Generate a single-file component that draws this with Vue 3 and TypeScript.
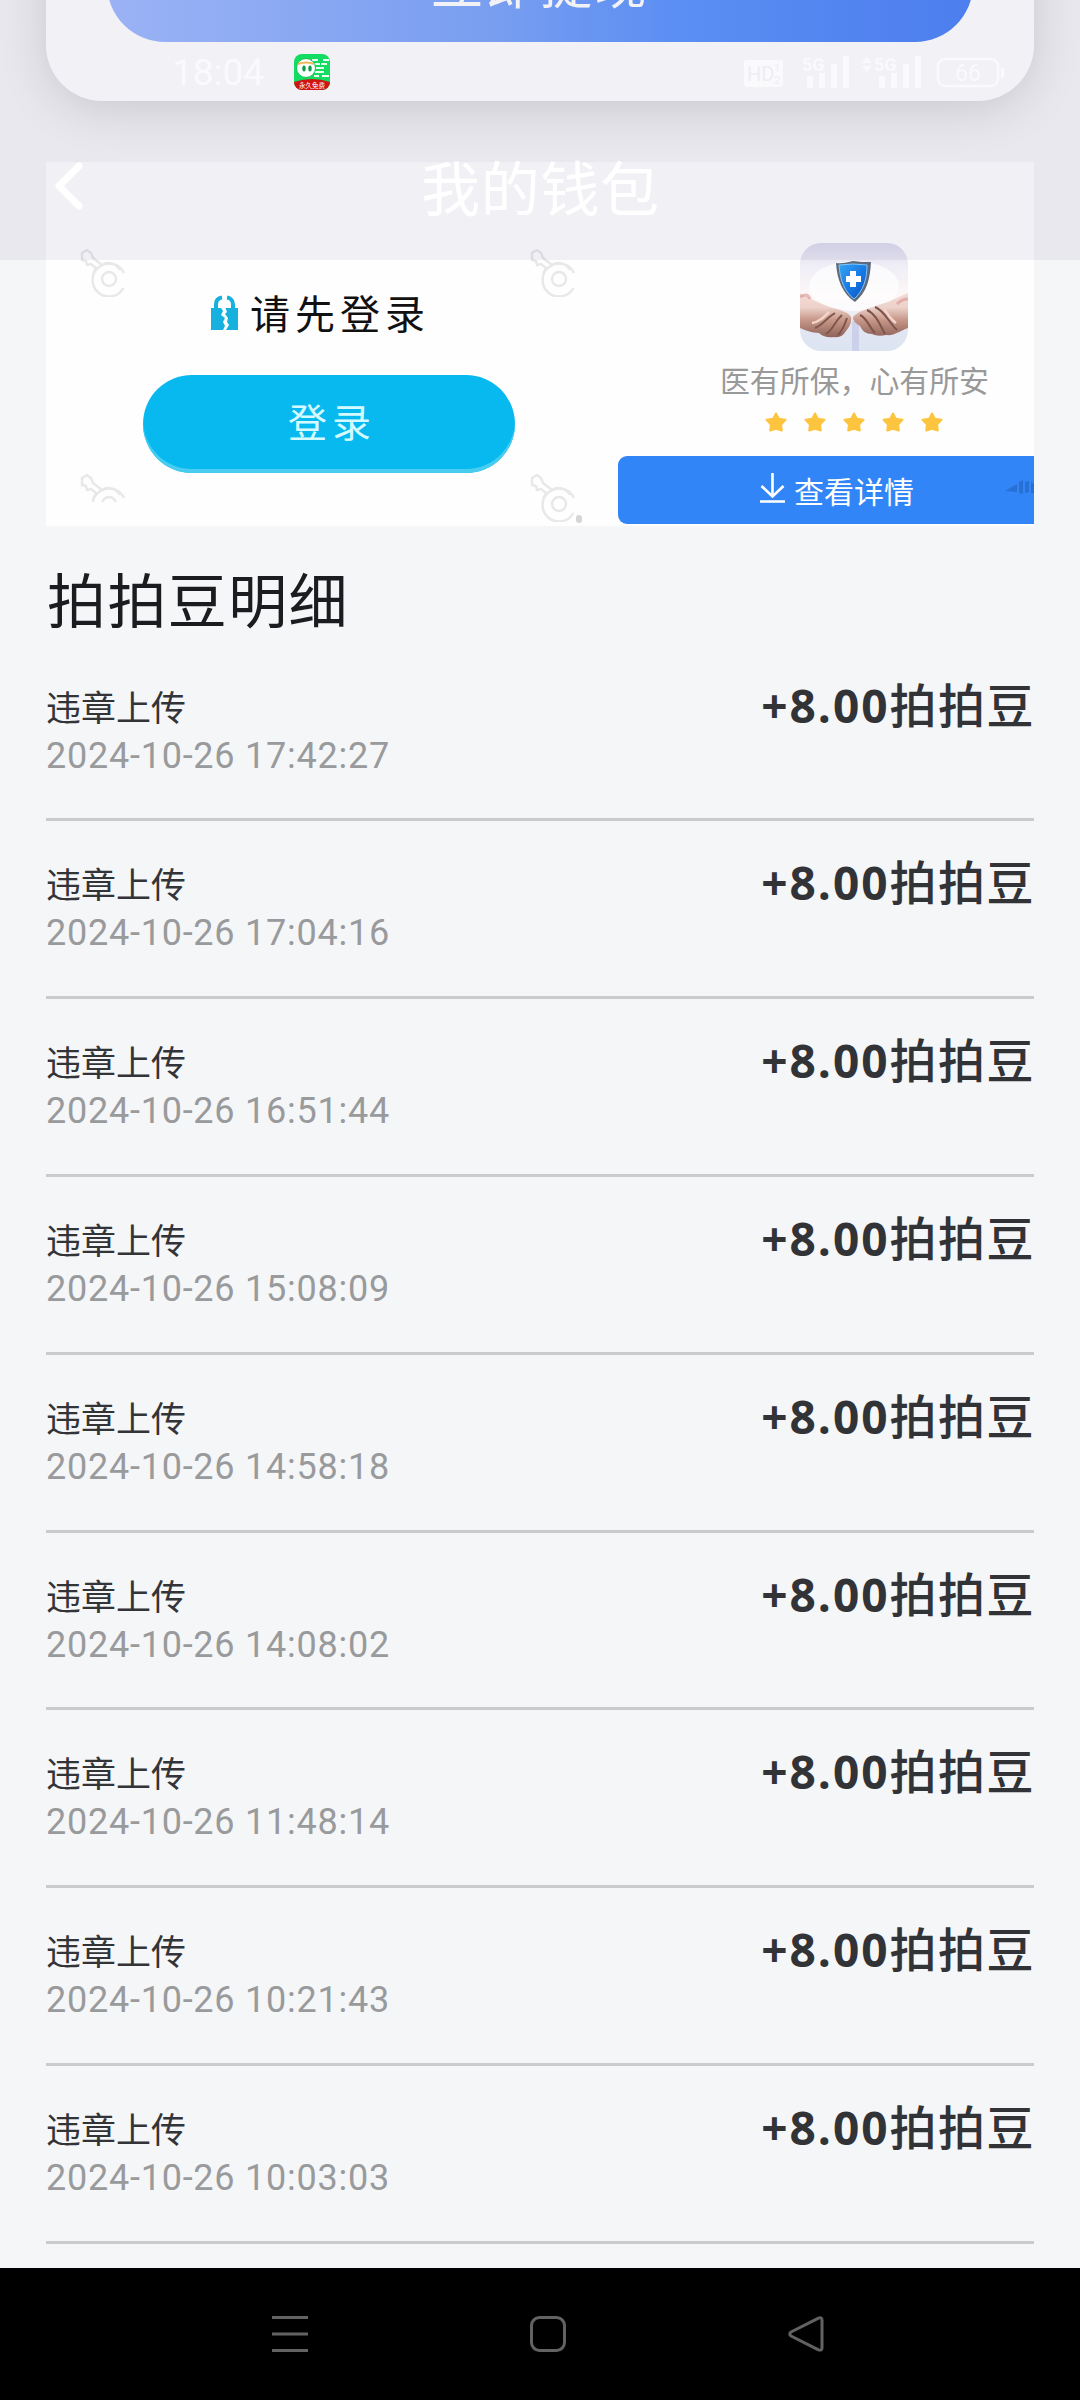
<script setup lang="ts">
interface RecordItem {
  label: string
  time: string
  amount: string
  unit: string
}

const times: string[] = [
  '2024-10-26 17:42:27',
  '2024-10-26 17:04:16',
  '2024-10-26 16:51:44',
  '2024-10-26 15:08:09',
  '2024-10-26 14:58:18',
  '2024-10-26 14:08:02',
  '2024-10-26 11:48:14',
  '2024-10-26 10:21:43',
  '2024-10-26 10:03:03',
]

const records: RecordItem[] = times.map((time) => ({
  label: '违章上传',
  time,
  amount: '+8.00',
  unit: '拍拍豆',
}))

const keyMarks: string[] = ['tl', 'tr', 'bl', 'br']
</script>

<template>
  <div class="page">
    <main class="content">
      <section class="balance-card">
        <button class="withdraw">立即提现</button>
      </section>

      <section class="ad">
        <div class="ad-login">
          <svg v-for="k in keyMarks" :key="k" class="key" :class="k" viewBox="0 0 48 48">
            <g fill="none" stroke="#e8e8ea" stroke-width="2.400">
              <path d="M45 24a16.500 16.500 0 1 0-.5 15M14 31c-1-6 1-9 3-12l-5-4-4 1-1-4-4-1V4l5-3 4 3 2 5 9 7c6-4 14-2 18 5" />
              <circle cx="30" cy="30" r="7" />
            </g>
          </svg>
          <i class="dot"></i>
          <div class="login-title">
            <svg class="lock" width="27" height="36" viewBox="0 0 27 36">
              <path d="M5 15V9.500C5 5.500 7.500 3 11 2.500M16 2.500c4 .5 6 3.500 6 7V15" fill="none" stroke="#16b1df" stroke-width="4" />
              <path d="M0 13h10l2 3-2 4 4 3-2 4 2 4-2 4H0zM27 13H14.500l1.500 4-2 2 3 4-1 4 2 3-3 5h12z" fill="#16b1df" />
            </svg>
            <span>请先登录</span>
          </div>
          <button class="login-btn">登录</button>
        </div>

        <div class="ad-promo">
          <svg class="photo" width="108" height="108" viewBox="0 0 108 108">
            <defs>
              <linearGradient id="sky" x1="0" y1="0" x2="0" y2="1">
                <stop offset="0" stop-color="#dcdcef" />
                <stop offset=".22" stop-color="#f0eef6" />
                <stop offset=".5" stop-color="#fdf8f7" />
                <stop offset=".75" stop-color="#e5e6f2" />
                <stop offset="1" stop-color="#dbe4f2" />
              </linearGradient>
              <linearGradient id="skin" gradientUnits="userSpaceOnUse" x1="0" y1="48" x2="0" y2="95">
                <stop offset="0" stop-color="#f6dcd6" />
                <stop offset=".35" stop-color="#ecd2ca" />
                <stop offset=".6" stop-color="#c99a8b" />
                <stop offset="1" stop-color="#8d6157" />
              </linearGradient>
              <linearGradient id="shield" x1="0" y1="0" x2="1" y2="1">
                <stop offset="0" stop-color="#36a5f4" />
                <stop offset=".55" stop-color="#1677e4" />
                <stop offset="1" stop-color="#0d4fb9" />
              </linearGradient>
              <clipPath id="photo-round"><rect width="108" height="108" rx="21" /></clipPath>
            </defs>
            <g clip-path="url(#photo-round)">
              <rect width="108" height="108" fill="url(#sky)" />
              <ellipse cx="54" cy="43" rx="45" ry="25" fill="#fff" opacity=".65" />
              <path d="M52 78h7v30h-7z" fill="#c7cce6" opacity=".8" />
              <path d="M0 50c10 5 20 11 33 15 8 2 15 4 18 9 1 5-1 9-5 14-3 5-7 7-12 6-5 1-11 0-15-4C12 90 5 87 0 85z" fill="url(#skin)" />
              <path d="M108 50c-10 4-20 10-30 12-10 4-20 6-25 12 0 5 3 6 7 9 2 5 6 8 12 8 4 2 9 2 14 1 8 1 14-4 22-7z" fill="url(#skin)" />
              <path d="M15 85c8-3 10-9 20-15M26 91c8-5 8-12 16-19M38 92c5-5 7-11 9-17" stroke="#7e544d" stroke-width="2" fill="none" />
              <path d="M60 72c7 3 9 12 15 18M67 67c9 4 13 15 18 24M75 64c10 4 14 16 22 23" stroke="#7e544d" stroke-width="2" fill="none" />
              <path d="M12 80c7-1 12-6 17-11M96 80c-6-4-8-9-12-14" stroke="#f4d3c8" stroke-width="2.500" fill="none" />
              <path d="M0 54c5-3 8-3 10 2M108 56c-4 0-8 2-11 5" stroke="#d8938f" stroke-width="3" fill="none" opacity=".6" />
              <path d="M36 20c6 1 12-1 17-2 6 1 11 1 18 1-1 17-4 30-16 40-12-8-18-22-19-39z" fill="#5e6b7c" />
              <path d="M39 22c5 0 9-1 14-1 5 0 9 1 14 1 0 15-4 26-13 34-9-7-14-18-15-34z" fill="url(#shield)" stroke="#81c6fa" />
              <path d="M50 28h6v5h5v6h-5v5h-6v-5h-4v-6h4z" fill="#fff" />
            </g>
          </svg>
          <p class="slogan">医有所保，心有所安</p>
          <div class="stars">
            <svg v-for="n in 5" :key="n" width="22" height="20" viewBox="0 0 22 20">
              <path d="M11 1.500l2.800 5.200 6.700 1.100-4.500 4.700.8 6-5.800-1.700L5.200 18.500l.8-6L1.500 7.800l6.700-1.100z" fill="#fdc43f" stroke="#fdc43f" stroke-width="2" stroke-linejoin="round" />
            </svg>
          </div>
          <div class="detail-btn">
            <svg width="25" height="30" viewBox="0 0 25 30" fill="none" stroke="#fff" stroke-width="2.600">
              <path d="M12.500 0v23M1.500 13l11 10.500 11-10.500M0 28.500h25" />
            </svg>
            <span>查看详情</span>
            <svg class="mark" width="29" height="15" viewBox="0 0 29 15" fill="#2566c4" opacity=".65">
              <path d="M0 11l12-7v8zM14 2l4-2v14l-4-1zM20 2l4-1v11l-4 1zM26 2l3 2v9h-3z" />
            </svg>
          </div>
        </div>
      </section>

      <h2 class="heading">拍拍豆明细</h2>

      <ul class="records">
        <li v-for="r in records" :key="r.time" class="record">
          <div class="info">
            <span class="label">{{ r.label }}</span>
            <span class="time">{{ r.time }}</span>
          </div>
          <div class="amount">{{ r.amount }}<span class="unit">{{ r.unit }}</span></div>
        </li>
      </ul>
    </main>

    <header class="overlay">
      <div class="status">
        <span class="clock">18:04</span>
        <svg class="app-icon" width="36" height="36" viewBox="0 0 36 36">
          <defs><clipPath id="icon-round"><rect width="36" height="36" rx="8" /></clipPath></defs>
          <g clip-path="url(#icon-round)">
            <rect width="36" height="36" fill="#12dc62" />
            <path d="M18 6h6M29 6h6M20 10h6M27 10h6M22 14h8M21 18h9M20 22h5M28 22h7" stroke="#e8fff0" stroke-width="2" />
            <circle cx="12" cy="14" r="9.500" fill="#fff" stroke="#12c257" />
            <path d="M4 10q8-3 16 0" stroke="#efb552" stroke-width="2" fill="none" />
            <ellipse cx="10" cy="14.500" rx="1.700" ry="3" fill="#0a9a48" />
            <ellipse cx="16" cy="14.500" rx="1.700" ry="3" fill="#0a9a48" />
            <path d="M0 28q18-6 36 0v8H0z" fill="#cf1511" />
            <text x="18" y="33.500" font-size="6.500" text-anchor="middle" fill="#fff">永久免费</text>
          </g>
        </svg>
        <div class="status-right">
          <svg width="262" height="36" viewBox="0 0 262 36" fill="#fafafd">
            <rect x="2" y="6" width="39" height="27" rx="3" />
            <text x="5" y="27" font-size="20" fill="#ededf2">HD</text>
            <text x="32" y="18" font-size="11" fill="#ededf2">1</text>
            <text x="32" y="30" font-size="11" fill="#ededf2">2</text>
            <text x="60" y="17" font-size="18" font-weight="700">5G</text>
            <path d="M65 22h6v12h-6zM77 19h6v15h-6zM89 10h6v24h-6zM101 2h6v32h-6z" />
            <path d="M120 9l5-6 5 6zM120 12h10l-5 6z" />
            <text x="132" y="17" font-size="18" font-weight="700">5G</text>
            <path d="M137 22h6v12h-6zM149 19h6v15h-6zM161 10h6v24h-6zM173 2h6v32h-6z" />
            <rect x="196" y="5" width="60" height="27" rx="7" fill="none" stroke="#fafafd" stroke-width="2.500" />
            <path d="M259 14h3v10h-3z" />
            <text x="226" y="27" font-size="23" text-anchor="middle">66</text>
          </svg>
        </div>
      </div>
      <div class="titlebar">
        <svg class="back" width="30" height="48" viewBox="0 0 30 48" fill="none" stroke="#fff" stroke-width="7" stroke-linecap="round" stroke-linejoin="round">
          <path d="M25 4L5 24l20 20" />
        </svg>
        <h1>我的钱包</h1>
      </div>
    </header>

    <nav class="navbar">
      <svg width="36" height="36" viewBox="0 0 36 36" stroke="#626262" stroke-width="3">
        <path d="M0 1.500h36M0 18h36M0 34.500h36" />
      </svg>
      <svg width="36" height="36" viewBox="0 0 36 36" fill="none" stroke="#626262" stroke-width="3">
        <rect x="1.500" y="1.500" width="33" height="33" rx="8" />
      </svg>
      <svg width="36" height="36" viewBox="0 0 36 36" fill="none" stroke="#626262" stroke-width="3" stroke-linejoin="round">
        <path d="M30.500 2.100L3 16q-2.500 2 0 4l27.500 13.800q3.500 1.200 3.500-2V4q0-3-3.500-1.900z" />
      </svg>
    </nav>
  </div>
</template>

<style>
body {
  margin: 0;
}
</style>

<style scoped>
.page {
  position: relative;
  display: flex;
  flex-direction: column;
  width: 1080px;
  height: 2400px;
  overflow: hidden;
  background: #f5f6f8;
  font-family: Roboto, "Noto Sans CJK SC", sans-serif;
  color: #1b1c1f;
}
h1, h2, p, ul {
  margin: 0;
  padding: 0;
  font-weight: 400;
}
button {
  border: 0;
  padding: 0;
  font-family: inherit;
}
.content {
  flex: 1;
  min-height: 0;
  overflow: hidden;
  padding: 0 46px;
}
.balance-card {
  display: flex;
  justify-content: center;
  align-items: flex-end;
  box-sizing: border-box;
  height: 201px;
  margin-top: -100px;
  padding-bottom: 59px;
  border-radius: 0 0 56px 56px;
  background: #fff;
  box-shadow: 0 8px 50px rgba(0, 0, 0, 0.14);
}
.withdraw {
  width: 866px;
  height: 116px;
  border-radius: 58px;
  background: linear-gradient(90deg, #a3bdff 0%, #7ea7fa 45%, #6097fd 65%, #4f85f8 100%);
  color: #fff;
  font-size: 52px;
  line-height: 121px;
  letter-spacing: 2.500px;
}
.ad {
  position: relative;
  display: flex;
  height: 364px;
  margin-top: 61px;
  background: #fefefe;
}
.ad-login {
  position: relative;
  display: flex;
  flex-direction: column;
  align-items: center;
  width: 572px;
}
.key {
  position: absolute;
  width: 48px;
  height: 48px;
}
.key.tl { left: 33px; top: 87px; }
.key.tr { left: 483px; top: 87px; }
.key.bl { left: 33px; top: 312px; clip-path: inset(0 0 20px 0); }
.key.br { left: 483px; top: 312px; }
.dot {
  position: absolute;
  left: 530px;
  top: 353px;
  width: 6px;
  height: 8px;
  border-radius: 3px;
  background: #d6d6d8;
}
.login-title {
  display: flex;
  align-items: center;
  align-self: flex-start;
  gap: 12px;
  height: 60px;
  margin: 120px 0 0 165px;
  font-size: 40px;
  letter-spacing: 5px;
  color: #111;
}
.lock {
  margin-top: 1px;
}
.login-btn {
  align-self: flex-start;
  width: 372px;
  height: 98px;
  margin: 33px 0 0 97px;
  border-radius: 49px;
  background: #08b9ef;
  box-shadow: inset 0 -4px 0 #48cdf1;
  color: #d4fbff;
  font-size: 39px;
  line-height: 98px;
  letter-spacing: 5px;
  text-indent: 6px;
}
.ad-promo {
  display: flex;
  flex-direction: column;
  align-items: flex-end;
  width: 416px;
}
.photo {
  display: block;
  margin: 81px 126px 0 0;
}
.slogan {
  height: 44px;
  margin: 9px 45px 0 0;
  font-size: 29.900px;
  line-height: 44px;
  color: #999;
  white-space: nowrap;
}
.stars {
  display: flex;
  gap: 17px;
  margin: 8px 91px 0 0;
}
.stars svg {
  display: block;
}
.detail-btn {
  position: relative;
  display: flex;
  align-items: center;
  box-sizing: border-box;
  width: 416px;
  height: 68px;
  margin-top: 24px;
  padding-left: 142px;
  gap: 9px;
  border-radius: 9px 0 0 9px;
  background: #3285f7;
  color: #fff;
  font-size: 30px;
}
.detail-btn svg {
  display: block;
  margin-top: -4px;
}
.detail-btn .mark {
  position: absolute;
  right: 0;
  top: 28px;
}
.heading {
  height: 88px;
  margin-top: 33px;
  padding-left: 1px;
  font-size: 59px;
  line-height: 88px;
  letter-spacing: 1.400px;
}
.records {
  list-style: none;
  margin-top: 27px;
}
.record {
  display: flex;
  justify-content: space-between;
  box-sizing: border-box;
  height: 177.900px;
  padding-top: 40px;
  border-bottom: 3px solid #c9cbcd;
}
.records .record:first-child {
  height: 147px;
  padding-top: 10px;
}
.info {
  display: flex;
  flex-direction: column;
}
.label {
  height: 49px;
  padding-top: 1px;
  font-size: 35px;
  line-height: 50px;
  color: #333437;
}
.time {
  height: 44px;
  font-size: 36px;
  line-height: 44px;
  letter-spacing: 0.760px;
  color: #999a9c;
}
.amount {
  display: flex;
  height: 56px;
  margin-top: -7px;
  font-family: "Open Sans", "Noto Sans CJK SC", sans-serif;
  font-size: 46px;
  font-weight: 700;
  line-height: 56px;
  letter-spacing: 2px;
  color: #323336;
}
.unit {
  margin-top: -2px;
  font-family: "Noto Sans CJK SC", sans-serif;
  font-weight: 500;
  font-size: 47px;
  letter-spacing: 1.500px;
  margin-right: -1px;
}
.overlay {
  position: absolute;
  left: 0;
  top: 0;
  width: 1080px;
  height: 260px;
  background: rgba(30, 10, 85, 0.06);
}
.status {
  display: flex;
  align-items: center;
  height: 36px;
  padding: 54px 76px 0 172px;
}
.clock {
  width: 122px;
  font-size: 37px;
  color: #fafafd;
}
.app-icon {
  font-family: "Noto Sans CJK SC", sans-serif;
}
.status-right {
  margin-left: auto;
  height: 36px;
}
.titlebar {
  display: flex;
  align-items: center;
  height: 88px;
  margin-top: 57px;
  padding-left: 54px;
  color: #fff;
}
.back {
  margin-top: -11px;
}
h1 {
  margin-left: 337px;
  font-size: 59px;
  line-height: 88px;
  letter-spacing: 0.700px;
}
.navbar {
  display: flex;
  align-items: center;
  justify-content: space-between;
  box-sizing: border-box;
  height: 132px;
  padding: 0 256px 0 272px;
  background: #000;
}
</style>
